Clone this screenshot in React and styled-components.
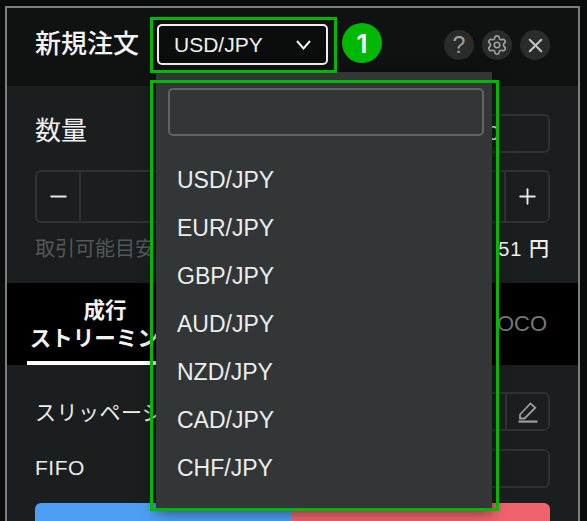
import React from 'react';
import styled, { createGlobalStyle } from 'styled-components';
import { Settings, X, Minus, Plus } from 'lucide-react';

const pairs = ['USD/JPY', 'EUR/JPY', 'GBP/JPY', 'AUD/JPY', 'NZD/JPY', 'CAD/JPY', 'CHF/JPY'];

const App = () => {
  return (
    <>
      <GlobalStyle />
      <Page>
        <Panel>
          <Header>
            <Title>新規注文</Title>
            <PairSelect>
              USD/JPY
              <svg width="15" height="10" viewBox="0 0 15 10" fill="none" stroke="#f0f0f0" strokeWidth="2">
                <path d="M1 1l6.5 7.5L14 1" />
              </svg>
            </PairSelect>
            <StepBadge>1</StepBadge>
            <HeaderIcons>
              <RoundButton>?</RoundButton>
              <RoundButton><Settings size={22} strokeWidth={1.8} /></RoundButton>
              <RoundButton $light><X size={23} strokeWidth={2.2} /></RoundButton>
            </HeaderIcons>
          </Header>

          <QuantitySection>
            <QuantityTop>
              <SectionLabel>数量</SectionLabel>
              <LotBox>0</LotBox>
            </QuantityTop>
            <Stepper>
              <StepCell><Minus size={25} strokeWidth={1.8} /></StepCell>
              <StepValue />
              <StepCell $right><Plus size={25} strokeWidth={1.8} /></StepCell>
            </Stepper>
            <Available>
              <span>取引可能目安</span>
              <strong>51 円</strong>
            </Available>
          </QuantitySection>

          <Tabs>
            <ActiveTab>成行<br />ストリーミング</ActiveTab>
            <Tab>OCO</Tab>
          </Tabs>

          <FormSection>
            <FormRow>
              <RowLabel>スリッページ</RowLabel>
              <RowField>
                <PencilCell>
                  <svg width="22" height="24" viewBox="0 0 22 24" fill="none" stroke="#9a9c9d" strokeWidth="1.8">
                    <path d="M3 14.5 13.5 3.5l4.8 4.2L7.5 18.5H3z" />
                    <path d="M1.5 21.6h19" strokeWidth="2.2" />
                  </svg>
                </PencilCell>
              </RowField>
            </FormRow>
            <FormRow>
              <RowLabel>FIFO</RowLabel>
              <RowField />
            </FormRow>
          </FormSection>

          <OrderButtons>
            <BuyButton />
            <SellButton />
          </OrderButtons>
        </Panel>

        <Dropdown>
          <SearchBox />
          <PairList>
            {pairs.map((pair) => (
              <PairItem key={pair}>{pair}</PairItem>
            ))}
          </PairList>
        </Dropdown>

        <Highlight $left={150} $top={17} $width={187} $height={56} />
        <Highlight $left={150} $top={80} $width={349} $height={431} />
      </Page>
    </>
  );
};

const GlobalStyle = createGlobalStyle`
  html, body {
    margin: 0;
    height: 521px;
    overflow: hidden;
    background: #0a0b0b;
  }

  * {
    box-sizing: border-box;
  }
`;

const fontStack = `"Liberation Sans", "Noto Sans CJK JP", sans-serif`;

const Page = styled.div`
  position: relative;
  width: 587px;
  height: 521px;
  padding: 6px 7px 0 5px;
  font-family: ${fontStack};
  color: #f2f2f2;
  overflow: hidden;
`;

const Panel = styled.div`
  height: 515px;
  border: 2px solid #7d7d7d;
  border-bottom: 0;
  display: flex;
  flex-direction: column;
  background: #1a1e1f;
`;

const Header = styled.div`
  height: 78px;
  flex: none;
  display: flex;
  align-items: flex-start;
  padding: 16px 28px 0 28px;
  background: #101111;
`;

const Title = styled.div`
  width: 122px;
  margin-top: 2px;
  font-size: 26px;
  font-weight: 500;
  line-height: 36px;
  color: #f5f5f5;
  white-space: nowrap;
`;

const PairSelect = styled.div`
  width: 171px;
  height: 41px;
  display: flex;
  align-items: center;
  justify-content: space-between;
  padding: 0 15px 0 15px;
  border: 2px solid #f0f0f0;
  border-radius: 5px;
  background: #0b0c0c;
  font-size: 21px;
  color: #f0f0f0;
`;

const StepBadge = styled.div`
  width: 40px;
  height: 40px;
  margin: -1px 0 0 14px;
  display: flex;
  align-items: center;
  justify-content: center;
  border-radius: 50%;
  background: #02b802;
  color: #fff;
  font-family: "Inter", sans-serif;
  font-size: 26px;
  font-weight: 600;
`;

const HeaderIcons = styled.div`
  margin: 6px 0 0 auto;
  display: flex;
  gap: 8px;
`;

const RoundButton = styled.div`
  width: 30px;
  height: 30px;
  display: flex;
  align-items: center;
  justify-content: center;
  border-radius: 50%;
  background: #2a2b2b;
  color: ${(p) => (p.$light ? '#c4c4c4' : '#a0a0a0')};
  font-size: 23px;
`;

const QuantitySection = styled.div`
  height: 197px;
  flex: none;
  padding: 28px 28px 0;
`;

const QuantityTop = styled.div`
  height: 39px;
  display: flex;
  align-items: center;
  justify-content: space-between;
`;

const SectionLabel = styled.div`
  font-size: 26px;
  color: #f0f0f0;
  margin-top: -11px;
`;

const LotBox = styled.div`
  width: 120px;
  height: 39px;
  padding-right: 49px;
  border: 2px solid #2e3233;
  border-radius: 6px;
  text-align: right;
  font-size: 20px;
  line-height: 35px;
  color: #f0f0f0;
`;

const Stepper = styled.div`
  height: 53px;
  margin-top: 17px;
  display: flex;
  border: 2px solid #2e3233;
  border-radius: 6px;
`;

const StepCell = styled.div`
  width: 44px;
  flex: none;
  display: flex;
  align-items: center;
  justify-content: center;
  color: #e8e8e8;
  border-${(p) => (p.$right ? 'left' : 'right')}: 2px solid #2e3233;
`;

const StepValue = styled.div`
  flex: 1;
`;

const Available = styled.div`
  margin-top: 13px;
  display: flex;
  justify-content: space-between;
  font-size: 20px;
  line-height: 26px;
  color: #54585a;

  strong {
    font-weight: 500;
    letter-spacing: 1px;
    color: #f0f0f0;
  }
`;

const Tabs = styled.div`
  height: 82px;
  flex: none;
  display: flex;
  justify-content: space-between;
  padding: 0 31px 0 20px;
  background: #000;
`;

const ActiveTab = styled.div`
  width: 156px;
  padding-top: 14px;
  height: 82px;
  border-bottom: 4px solid #fff;
  text-align: center;
  font-size: 21.5px;
  font-weight: 700;
  line-height: 28px;
  color: #f2f2f2;
  white-space: nowrap;
`;

const Tab = styled.div`
  font-size: 22px;
  line-height: 82px;
  color: #777;
`;

const FormSection = styled.div`
  flex: 1;
  padding: 27px 28px 0;
  display: flex;
  flex-direction: column;
  gap: 18px;
`;

const FormRow = styled.div`
  height: 39px;
  display: flex;
  align-items: center;
  justify-content: space-between;
`;

const RowLabel = styled.div`
  font-size: 21px;
  letter-spacing: 0.5px;
  color: #ececec;
  margin-top: -2px;
`;

const RowField = styled.div`
  width: 160px;
  height: 39px;
  display: flex;
  justify-content: flex-end;
  border: 2px solid #2e3233;
  border-radius: 6px;
`;

const PencilCell = styled.div`
  width: 43px;
  display: flex;
  align-items: center;
  justify-content: center;
  border-left: 2px solid #2e3233;
`;

const OrderButtons = styled.div`
  height: 18px;
  flex: none;
  margin: 0 28px;
  display: flex;
`;

const BuyButton = styled.div`
  width: 257px;
  background: #4e9ff3;
  border-radius: 6px 0 0 0;
`;

const SellButton = styled.div`
  flex: 1;
  background: #ee636e;
  border-radius: 0 6px 0 0;
`;

const Dropdown = styled.div`
  position: absolute;
  left: 156px;
  top: 72px;
  width: 336px;
  height: 436px;
  padding: 16px 8px 0 12px;
  background: #323637;
  box-shadow: 0 4px 14px rgba(0, 0, 0, 0.55);
`;

const SearchBox = styled.div`
  height: 48px;
  border: 2px solid #5f6364;
  border-radius: 5px;
`;

const PairList = styled.div`
  margin-top: 20px;
  padding-left: 9px;
`;

const PairItem = styled.div`
  height: 48px;
  display: flex;
  align-items: center;
  font-size: 23px;
  color: #ededed;
`;

const Highlight = styled.div`
  position: absolute;
  left: ${(p) => p.$left}px;
  top: ${(p) => p.$top}px;
  width: ${(p) => p.$width}px;
  height: ${(p) => p.$height}px;
  border: 3px solid #02b802;
  pointer-events: none;
`;

export default App;
